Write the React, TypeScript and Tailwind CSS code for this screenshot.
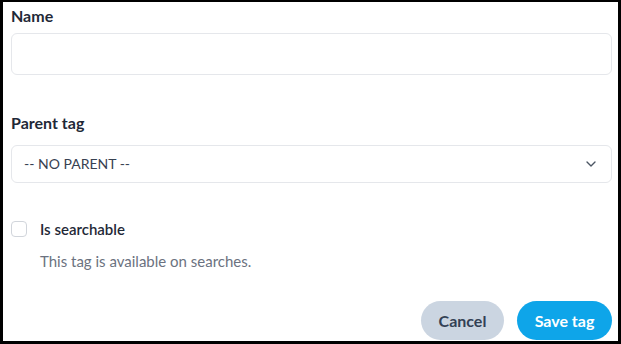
import React, { useState } from "react";
import { ChevronDown } from "lucide-react";

export default function App() {
  const [name, setName] = useState("");
  const [searchable, setSearchable] = useState(false);

  return (
    <div
      className="w-[621px] h-[344px] overflow-hidden bg-white border-black border-l-[3px] border-t-2 border-r-[3px] border-b-[3px] pl-[8px] pr-[6px] pt-[4px]"
      style={{ fontFamily: "Lato, 'Noto Sans', sans-serif" }}
    >
      <label className="block text-[16px] leading-5 font-bold text-[#1f2937]">Name</label>
      <input
        value={name}
        onChange={(e) => setName(e.target.value)}
        className="mt-[7px] block w-full h-[42px] rounded-md border border-[#e5e7eb] px-3 text-sm text-[#374151] outline-none"
      />

      <label className="block mt-[38px] text-[16px] leading-5 font-bold text-[#1f2937]">Parent tag</label>
      <div className="mt-[12px] relative">
        <select className="block w-full h-[38px] appearance-none rounded-md border border-[#e5e7eb] bg-white pl-3 pr-10 text-sm text-[#374151] outline-none">
          <option>-- NO PARENT --</option>
        </select>
        <ChevronDown className="absolute right-[13px] top-[11px] w-4 h-4 text-[#4b5563] pointer-events-none" strokeWidth={2} />
      </div>

      <div className="mt-[36px] flex items-start gap-[13px]">
        <button
          onClick={() => setSearchable(!searchable)}
          className={`mt-[2px] w-4 h-4 rounded border ${searchable ? "bg-[#0ea5e9] border-[#0ea5e9]" : "bg-white border-[#d1d5db]"}`}
        />
        <div>
          <p className="text-[15px] leading-5 font-semibold text-[#1f2937]">Is searchable</p>
          <p className="mt-[12px] text-[15px] leading-5 text-[#6b7280]">This tag is available on searches.</p>
        </div>
      </div>

      <div className="mt-[30px] flex justify-end gap-[13px]">
        <button className="h-[39px] w-[83px] rounded-full bg-[#cbd5e1] text-[16px] font-bold text-[#334155]">Cancel</button>
        <button className="h-[39px] w-[95px] rounded-full bg-[#0ea5e9] text-[16px] font-bold text-white">Save tag</button>
      </div>
    </div>
  );
}
